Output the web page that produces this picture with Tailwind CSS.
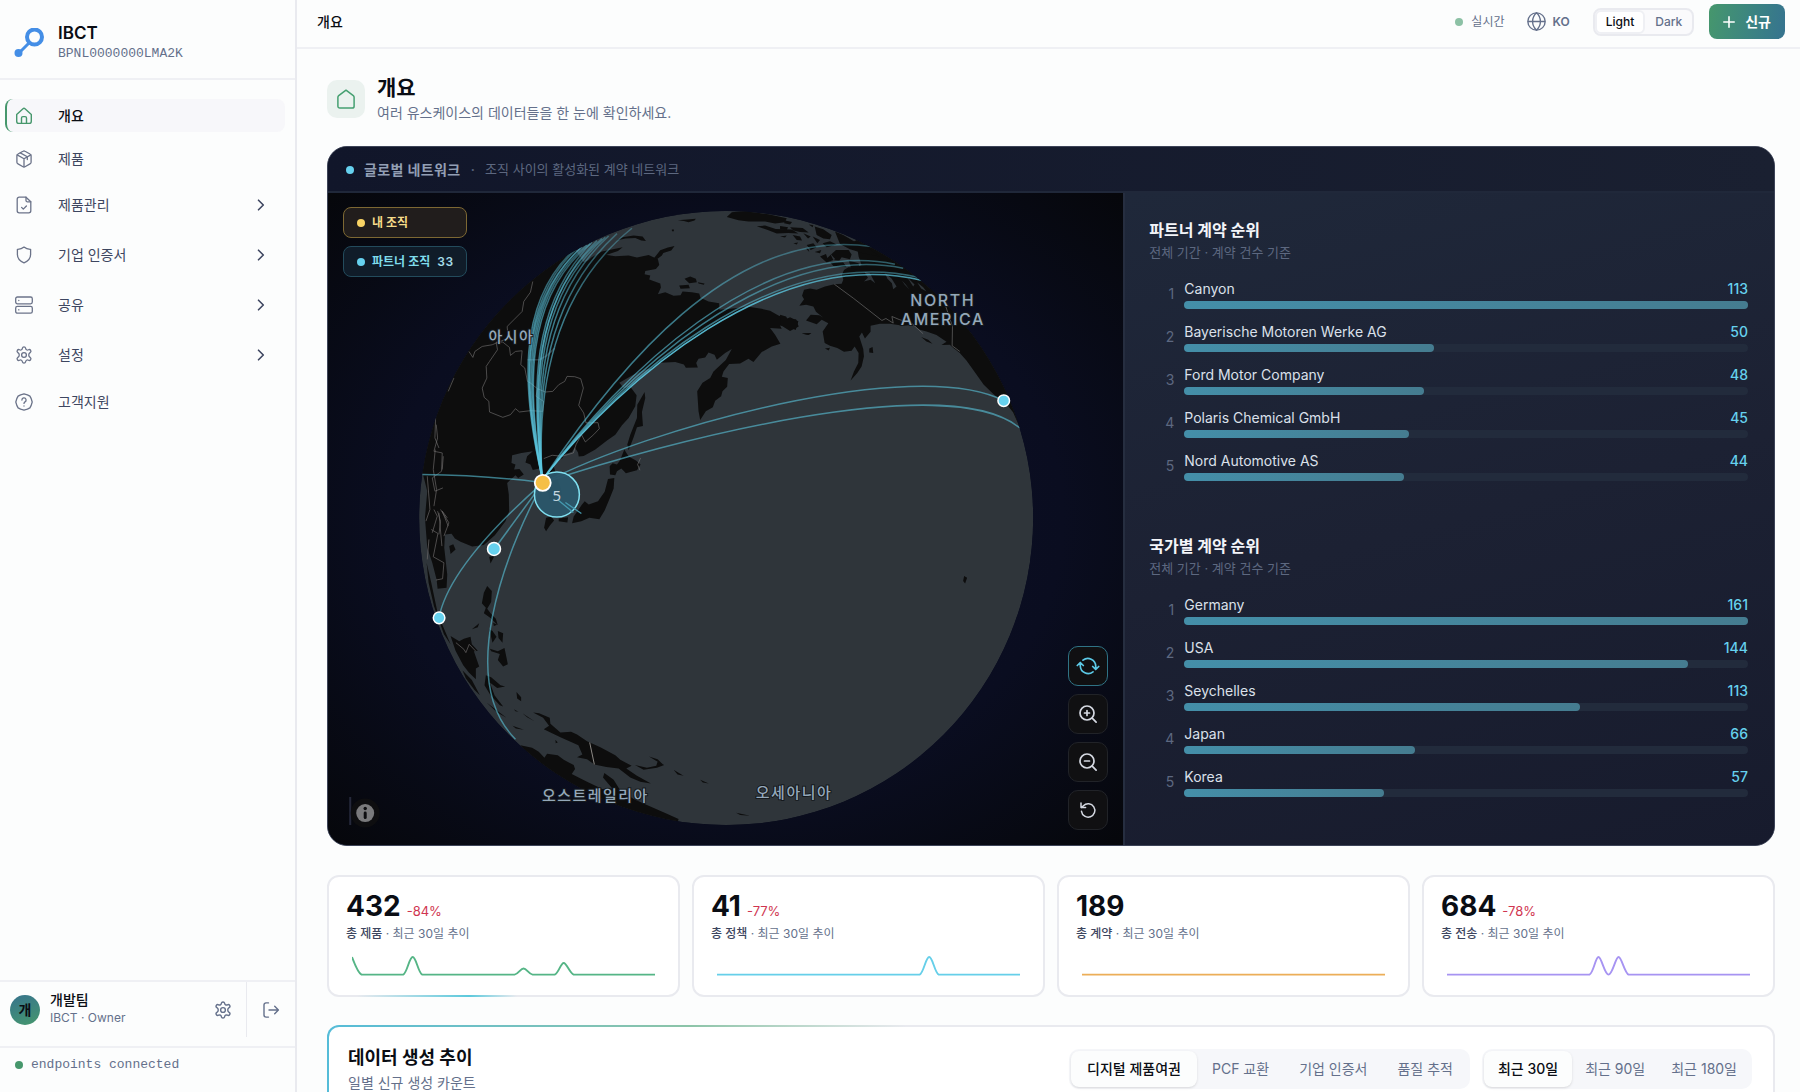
<!DOCTYPE html>
<html lang="ko">
<head>
  <meta charset="UTF-8">
  <title>IBCT - 개요</title>
  <meta name="viewport" content="width=device-width, initial-scale=1.0">
  <script src="https://cdn.jsdelivr.net/npm/@tailwindcss/browser@4"></script>
</head>
<body class="flex h-screen overflow-hidden bg-[#fcfdfd] font-['Inter','Noto_Sans_CJK_KR',sans-serif] text-[#0a0d14]">

  <!-- Sidebar -->
  <aside class="flex w-[297px] shrink-0 flex-col border-r-2 border-[#e9eaef]">
    <div class="flex h-20 items-center gap-3.5 border-b-2 border-[#eff0f4] pl-3.5 pt-2">
      <svg class="size-[30px]" viewBox="0 0 30 30" fill="none" stroke="#448ee6">
        <circle cx="20.500" cy="9" r="7.500" stroke-width="4"/>
        <path d="M15 15L5 25" stroke-width="3"/>
        <circle cx="4.500" cy="25" r="4" fill="#448ee6" stroke="none"/>
      </svg>
      <div>
        <p class="text-[17px] leading-[22px] font-semibold">IBCT</p>
        <p class="font-['Liberation_Mono',monospace] text-[13px] leading-5 text-[#64708b]">BPNL0000000LMA2K</p>
      </div>
    </div>

    <nav class="flex flex-1 flex-col gap-2.5 pl-[5px] pr-2.5 pt-[19px] text-sm text-[#3d4660]">
      <a href="#" class="flex h-[33px] items-center gap-[25px] rounded-lg border-l-2 border-[#46976c] bg-[#f7f7fa] pl-2 font-medium text-[#0a0d14]">
        <svg class="size-[18px] text-[#46976c]" viewBox="0 0 18 18" fill="none" stroke="currentColor" stroke-width="1.400" stroke-linecap="round" stroke-linejoin="round"><path d="M1.700 7.400L8 1.700a1.500 1.500 0 0 1 2 0l6.300 5.700v6.800a2.200 2.200 0 0 1-2.200 2.200H3.900a2.200 2.200 0 0 1-2.200-2.200z"/><path d="M6.500 16.300V11a1.400 1.400 0 0 1 1.400-1.400h2.200a1.400 1.400 0 0 1 1.400 1.400v5.300"/></svg>
        개요
      </a>
      <a href="#" class="flex h-[33px] items-center gap-[25px] pl-2.5">
        <svg class="size-[18px] text-[#6b7389]" viewBox="0 0 18 18" fill="none" stroke="currentColor" stroke-width="1.300" stroke-linecap="round" stroke-linejoin="round"><path d="M8 1.300a2 2 0 0 1 2 0l5 2.700a2 2 0 0 1 1.100 1.700v6.500a2 2 0 0 1-1.100 1.700l-5 2.800a2 2 0 0 1-2 0l-5-2.800a2 2 0 0 1-1.100-1.700V5.700A2 2 0 0 1 3 4z"/><path d="M2.200 4.900L9 8.700l6.800-3.800M9 8.700v8M5.300 2.900l7 3.900v2.700"/></svg>
        제품
      </a>
      <button class="flex h-10 items-center gap-[25px] pl-2.5 pr-5 text-left">
        <svg class="size-[18px] text-[#6b7389]" viewBox="0 0 18 18" fill="none" stroke="currentColor" stroke-width="1.300" stroke-linecap="round" stroke-linejoin="round"><path d="M11 1.200H4.200A2 2 0 0 0 2.200 3.200v11.600a2 2 0 0 0 2 2h9.600a2 2 0 0 0 2-2V5.800z"/><path d="M11 1.200v3.200a1.400 1.400 0 0 0 1.400 1.400h3.400M6.600 11.400l1.700 1.700 3.100-3.100"/></svg>
        <span class="flex-1">제품관리</span>
        <svg class="h-3 w-2" viewBox="0 0 8 12" fill="none" stroke="currentColor" stroke-width="1.600" stroke-linecap="round" stroke-linejoin="round"><path d="M1.500 1.200L6.300 6l-4.800 4.800"/></svg>
      </button>
      <button class="flex h-10 items-center gap-[25px] pl-2.5 pr-5 text-left">
        <svg class="size-[18px] text-[#6b7389]" viewBox="0 0 18 18" fill="none" stroke="currentColor" stroke-width="1.300" stroke-linejoin="round"><path d="M9 1.100c1.700 1.500 3.900 2.300 6.600 2.200v5.200c0 4-2.600 6.700-6.600 8.300-4-1.600-6.600-4.300-6.600-8.300V3.300C5.100 3.400 7.300 2.600 9 1.100z"/></svg>
        <span class="flex-1">기업 인증서</span>
        <svg class="h-3 w-2" viewBox="0 0 8 12" fill="none" stroke="currentColor" stroke-width="1.600" stroke-linecap="round" stroke-linejoin="round"><path d="M1.500 1.200L6.300 6l-4.800 4.800"/></svg>
      </button>
      <button class="flex h-10 items-center gap-[25px] pl-2.5 pr-5 text-left">
        <svg class="size-[18px] text-[#6b7389]" viewBox="0 0 18 18" fill="none" stroke="currentColor" stroke-width="1.300" stroke-linecap="round"><rect x="0.700" y="1" width="16.600" height="6.800" rx="1.700"/><rect x="0.700" y="10.400" width="16.600" height="6.800" rx="1.700"/><path d="M3.800 4.300v.2M3.800 13.700v.2"/></svg>
        <span class="flex-1">공유</span>
        <svg class="h-3 w-2" viewBox="0 0 8 12" fill="none" stroke="currentColor" stroke-width="1.600" stroke-linecap="round" stroke-linejoin="round"><path d="M1.500 1.200L6.300 6l-4.800 4.800"/></svg>
      </button>
      <button class="flex h-10 items-center gap-[25px] pl-2.5 pr-5 text-left">
        <svg class="size-[18px] text-[#6b7389]" viewBox="0 0 18 18" fill="none" stroke="currentColor" stroke-width="1.300" stroke-linejoin="round"><path d="M7.400 2.200a1.650 1.650 0 0 1 3.200 0 1.900 1.900 0 0 0 2.800 1.600 1.600 1.600 0 0 1 1.700 2.800 2.800 2.800 0 0 0 0 4.800 1.600 1.600 0 0 1-1.700 2.800 1.900 1.900 0 0 0-2.800 1.600 1.650 1.650 0 0 1-3.200 0 1.900 1.900 0 0 0-2.800-1.600 1.600 1.600 0 0 1-1.700-2.800 2.800 2.800 0 0 0 0-4.800 1.600 1.600 0 0 1 1.700-2.800 1.900 1.900 0 0 0 2.800-1.600z"/><circle cx="9" cy="9" r="2.400"/></svg>
        <span class="flex-1">설정</span>
        <svg class="h-3 w-2" viewBox="0 0 8 12" fill="none" stroke="currentColor" stroke-width="1.600" stroke-linecap="round" stroke-linejoin="round"><path d="M1.500 1.200L6.300 6l-4.800 4.800"/></svg>
      </button>
      <a href="#" class="flex h-[33px] items-center gap-[25px] pl-2.5">
        <svg class="size-[18px] text-[#6b7389]" viewBox="0 0 18 18" fill="none" stroke="currentColor" stroke-width="1.300" stroke-linecap="round" stroke-linejoin="round"><path d="M9 .8l3.400 1 2.500 1.300 1.300 2.500 1 3.400-1 3.400-1.300 2.500-2.500 1.300-3.400 1-3.400-1-2.500-1.300-1.300-2.500-1-3.400 1-3.400 1.300-2.500 2.500-1.300z"/><path d="M6.900 7a2.100 2.100 0 1 1 3.100 1.900c-.7.400-1 .8-1 1.500M9 12.900v.1"/></svg>
        고객지원
      </a>
    </nav>

    <div class="flex h-[66px] border-t-2 border-[#eff0f4]">
      <div class="flex h-[55px] flex-1 items-center gap-2.5 border-r border-[#e9eaef] pl-2.5 pr-3.5">
        <span class="flex size-[30px] items-center justify-center rounded-full bg-linear-160 from-[#38738c] to-[#46976c] text-sm font-semibold">개</span>
        <div class="flex-1 pb-0.5">
          <p class="text-sm leading-[18px] font-medium">개발팀</p>
          <p class="text-xs leading-[17px] text-[#64708b]">IBCT · Owner</p>
        </div>
        <button aria-label="설정" class="text-[#64708b]">
          <svg class="size-[18px]" viewBox="0 0 18 18" fill="none" stroke="currentColor" stroke-width="1.400" stroke-linejoin="round"><path d="M7.400 2.200a1.650 1.650 0 0 1 3.200 0 1.900 1.900 0 0 0 2.800 1.600 1.600 1.600 0 0 1 1.700 2.800 2.800 2.800 0 0 0 0 4.800 1.600 1.600 0 0 1-1.700 2.800 1.900 1.900 0 0 0-2.800 1.600 1.650 1.650 0 0 1-3.200 0 1.900 1.900 0 0 0-2.800-1.600 1.600 1.600 0 0 1-1.700-2.800 2.800 2.800 0 0 0 0-4.800 1.600 1.600 0 0 1 1.700-2.800 1.900 1.900 0 0 0 2.800-1.600z"/><circle cx="9" cy="9" r="2.400"/></svg>
        </button>
      </div>
      <button aria-label="로그아웃" class="flex h-[55px] w-12 items-center justify-center text-[#64708b]">
        <svg class="size-[18px]" viewBox="0 0 18 18" fill="none" stroke="currentColor" stroke-width="1.400" stroke-linecap="round" stroke-linejoin="round"><path d="M6.500 1.900H4a2 2 0 0 0-2 2v10.200a2 2 0 0 0 2 2h2.500M7 9h9.300M12.700 5.300L16.400 9l-3.700 3.700"/></svg>
      </button>
    </div>
    <div class="flex h-[46px] items-center gap-2 border-t-2 border-[#eff0f4] pb-2.5 pl-[15px] font-['Liberation_Mono',monospace] text-[13px] text-[#64708b]">
      <span class="size-2 rounded-full bg-[#46976c]"></span>endpoints connected
    </div>
  </aside>

  <div class="flex min-w-0 flex-1 flex-col">
    <!-- Top bar -->
    <header class="flex h-[49px] shrink-0 items-center border-b-2 border-[#eff0f4] pb-1 pl-5 pr-[15px]">
      <p class="flex-1 text-sm leading-5 font-medium">개요</p>
      <span class="flex items-center gap-2 text-xs text-[#64708b]"><span class="size-2 rounded-full bg-[#8cc1a5]"></span>실시간</span>
      <button class="ml-[23px] flex items-center gap-1.5 text-xs font-semibold text-[#64708b]">
        <svg class="size-[19px]" viewBox="0 0 18 18" fill="none" stroke="currentColor" stroke-width="1.300"><circle cx="9" cy="9" r="8.200"/><path d="M.8 9h16.400M9 .8c2.400 2.200 3.700 5 3.700 8.200s-1.300 6-3.700 8.200C6.600 15 5.300 12.200 5.300 9S6.600 3 9 .8z"/></svg>
        KO
      </button>
      <div class="ml-[23px] flex rounded-lg border-2 border-[#e9eaef] bg-[#fafafc] text-xs leading-4 font-medium text-[#64708b]">
        <button class="rounded-md border-2 border-[#eff0f4] bg-white px-[9px] py-0.5 text-[#0a0d14]">Light</button>
        <button class="px-2.5 py-1">Dark</button>
      </div>
      <button class="ml-[15px] flex h-[35px] items-center gap-2.5 rounded-lg bg-linear-100 from-[#46976c] to-[#36738f] px-3.5 text-sm font-bold text-white">
        <svg class="size-3" viewBox="0 0 12 12" stroke="currentColor" stroke-width="1.600" stroke-linecap="round"><path d="M6 .8v10.400M.8 6h10.400"/></svg>
        신규
      </button>
    </header>

    <main class="flex flex-1 flex-col overflow-hidden pl-[30px] pr-[25px] pt-[25px]">
      <div class="flex shrink-0 items-center gap-3">
        <span class="flex size-[38px] items-center justify-center rounded-[10px] bg-[#ebf2ef]">
          <svg class="size-5 text-[#46a071]" viewBox="0 0 20 20" fill="none" stroke="currentColor" stroke-width="1.500" stroke-linejoin="round"><path d="M1.900 8.200a2 2 0 0 1 .8-1.600L10 1.200l7.300 5.400a2 2 0 0 1 .8 1.600v9a1.900 1.900 0 0 1-1.900 1.900H3.800a1.900 1.900 0 0 1-1.900-1.900z"/></svg>
        </span>
        <div>
          <h1 class="text-[21px] leading-7 font-bold">개요</h1>
          <p class="text-sm leading-[22px] text-[#64708b]">여러 유스케이스의 데이터들을 한 눈에 확인하세요.</p>
        </div>
      </div>

      <!-- Global network -->
      <section class="mt-[22px] shrink-0 overflow-hidden rounded-[20px] border border-[#3d4458] bg-[#12172a]">
        <div class="flex h-[46px] items-center gap-2.5 border-b-2 border-[#20283a] bg-linear-to-r from-[#11162a] to-[#1a2031] px-[18px] pt-0.5">
          <span class="size-2 rounded-full bg-[#66d1ee]"></span>
          <h2 class="text-sm font-semibold tracking-wide text-[#939fb4]">글로벌 네트워크</h2>
          <span class="text-[#566079]">·</span>
          <p class="text-[13px] text-[#5d6880]">조직 사이의 활성화된 계약 네트워크</p>
        </div>
        <div class="grid grid-cols-[55fr_45fr]">
          <div class="relative bg-radial from-[#0d1028] via-[#0a0d20] via-60% to-[#06070b]">
            <svg class="absolute inset-0 size-full" viewBox="328 193 795 653" fill="none">
              <defs>
                <clipPath id="globe"><circle cx="726" cy="518.500" r="307.500"/></clipPath>
                <linearGradient id="fade" gradientUnits="userSpaceOnUse" x1="0" y1="90" x2="0" y2="350">
                  <stop offset="0" stop-color="#5cc9e2" stop-opacity=".6"/>
                  <stop offset="1" stop-color="#5cc9e2"/>
                </linearGradient>
              </defs>
              <g clip-path="url(#globe)">
                <circle cx="726" cy="518.500" r="307.500" fill="#2f353a"/>

                <!-- Eurasia, Japan -->
                <g transform="translate(415 205) scale(.33333)">
                  <g fill="#0d0d0d">
                    <path d="M505 172L540 158L560 148L600 154L640 152L665 158L700 150L728 163L732 180L722 192L690 198L688 208L705 212L702 224L735 236L737 248L728 268L750 262L775 273L796 271L802 260L830 262L852 266L856 279L880 290L912 295L913 315L960 310L1000 306L1040 312L1065 318L1090 332L1115 342L1125 337L1150 349L1142 376L1120 366L1095 362L1100 372L1065 370L1080 390L1096 417L1070 425L1040 442L1015 472L1000 462L975 476L942 478L925 500L920 516L938 520L936 546L922 560L918 575L900 588L893 608L872 620L855 646L850 620L846 560L862 534L885 520L895 500L932 466L950 433L930 445L905 465L898 450L880 443L870 458L850 462L843 475L848 488L812 489L806 479L780 472L735 474L712 492L690 494L650 512L612 534L625 550L645 546L664 572L660 605L640 640L620 662L600 690L575 708L540 735L505 754L490 756L488 744L478 728L470 742L450 748L440 762L425 762L415 785L425 820L436 850L440 872L418 880L402 884L396 850L385 812L378 790L352 796L345 780L330 774L335 755L352 740L318 745L290 752L288 775L300 780L296 795L312 793L325 810L308 820L300 812L275 835L280 870L281 920L270 950L238 992L205 1022L170 1026L135 1012L118 1002L108 988L88 990L86 1030L95 1110L93 1150L66 1153L63 1125L50 1075L35 1030L28 940L35 860L22 808L-60 760L0 200L300 30L470 120Z"/>
                    <path d="M604 107L622 97L655 92L682 95L692 108L678 107L660 99L630 101Z"/>
                    <path d="M510 176L528 158L560 140L622 127L608 138L572 150Z"/>
                    <path d="M713 164L735 136L758 128L778 123L768 137L744 144L740 152L722 165Z"/>
                    <path d="M788 46L842 41L838 47L820 52L806 48ZM770 74h6v5h-6z"/>
                    <path d="M808 222L825 215L842 222L845 232L822 235ZM848 232L868 236L866 240L850 236ZM792 242L820 240L824 250L796 252Z"/>
                    <path d="M935 36L950 22L990 18L1060 28L1115 40L1110 52L1080 56L1050 50L1000 50L970 46Z"/>
                    <path d="M1025 64L1050 62L1082 72L1130 74L1150 86L1120 84L1085 86L1060 76ZM1095 95L1115 92L1110 98Z"/>
                    <path d="M688 562L690 580L680 622L683 664L665 668L655 698L640 737L636 720L645 690L665 640L666 600Z"/>
                    <path d="M627 735L640 756L662 768L676 780L665 797L645 802L632 806L618 792L605 800L600 812L584 810L583 785L592 776L605 780L614 768Z"/>
                    <path d="M578 823L597 820L595 852L584 880L568 918L552 944L522 940L498 950L470 956L475 936L500 900L508 890L520 900L548 890L568 862Z"/>
                    <path d="M392 940L408 936L416 948L404 962L392 980L386 970ZM430 942L458 938L456 954L430 950Z"/>
                    <path d="M1160 386L1188 385L1180 391Z"/>
                  </g>
                  <g stroke="#7b7878" stroke-width="2.500" stroke-linejoin="round" stroke-opacity=".7">
                    <path d="M242 412L246 435L222 470L212 485L214 520L200 550L206 578L220 590L222 622L262 638L285 630L300 612L312 622L345 618L382 620L384 590L362 575L366 552L345 535L336 530L328 490L316 480L320 438L300 440L285 452L282 428L262 412Z"/>
                    <path d="M366 552L390 562L412 560L430 540L448 530L455 515L478 516L496 522L504 550L490 602L505 625L512 655L548 654L552 672L535 690L510 712L498 690L482 720L474 745L440 755L410 752L385 762"/>
                    <path d="M352 230L345 262L325 290L320 320L295 345L275 365L278 400L230 420L200 425L178 440L172 458L160 440"/>
                    <path d="M62 660L66 700L55 740L80 745L78 800L50 820L58 860L82 850M66 920L75 950L70 990M60 640L58 700L70 730M95 940L80 920L98 965"/>
                    <path d="M676 760L667 780L674 797M98 560L115 520"/>
                    <path d="M336 465L372 465L395 452L418 430" stroke="#3f4850" stroke-width="5"/>
                  </g>
                </g>

                <!-- North America -->
                <g transform="translate(780 190) scale(.33333)">
                  <path fill="#0d0d0d" d="M58 348L72 328L66 318L72 300L90 296L110 300L135 290L163 283L185 282L190 270L186 255L192 240L205 232L230 232L245 225L236 200L232 175L222 155L250 140L420 220L620 420L760 700L720 712L700 668L678 640L672 640L655 625L640 612L612 585L580 540L560 512L540 490L520 474L510 465L485 466L500 456L470 436L440 425L420 420L400 405L370 408L330 402L300 402L272 408L272 426L255 446L246 428L238 440L250 478L252 500L245 530L232 550L212 572L222 545L235 520L236 490L224 470L215 483L192 486L172 475L150 468L134 460L128 425L145 400L125 390L110 403L78 392L92 375L118 376L130 384L108 366L100 350L78 345Z"/>
                  <path fill="#0d0d0d" d="M0 375L18 380L24 390L48 388L56 410L30 424L0 405ZM66 431L94 430L86 436ZM135 476L150 474L146 482ZM268 476L278 472L280 490L268 488ZM424 442L445 450L458 462L440 455ZM553 1160L562 1165L556 1182L550 1175Z"/>
                  <path fill="#0d0d0d" d="M120 200L138 192L142 204L168 180L206 180L215 194L210 208L185 202L178 212L160 210L140 218ZM104 110L130 118L155 135L150 148L130 146L110 135ZM165 125L190 135L232 160L270 178L300 200L250 190L210 178L180 162ZM70 130L92 140L84 146ZM38 135L60 140L66 152L50 150ZM15 92L36 96L30 104L12 100ZM0 108L24 112L20 120L0 118ZM30 112L68 114L86 128L60 126L40 122ZM80 165L100 160L110 172L92 180ZM98 140L120 150L112 160ZM128 160L150 154L170 164L140 172ZM88 186L78 176L84 174ZM104 186L124 180L120 190ZM150 216L190 218L200 232L160 228ZM206 212L236 220L240 240L214 236ZM40 160L54 158L50 164ZM86 104L100 106L98 112Z"/>
                  <path fill="#2f353a" d="M254 246L264 264L252 275L272 270L286 280L270 250ZM316 250L335 266L350 290L340 298L336 280L322 266ZM366 272L378 285L388 298L374 284ZM382 262L404 284L400 290ZM412 278L430 292L440 305L424 296ZM150 190L166 208L160 210ZM214 180L222 190L216 192Z"/>
                  <path stroke="#6e6e6e" stroke-width="2" stroke-linejoin="round" d="M163 283L220 325L306 392L318 386L340 400L336 380L360 390L395 400L430 432M498 350L518 410L517 468L540 485"/>
                </g>

                <!-- South-east Asia, Oceania -->
                <g transform="translate(400 450) scale(.33333)">
                  <path fill="#0d0d0d" d="M146 290L158 284L165 300L150 314ZM266 322L282 320L270 342ZM260 410L274 425L272 458L260 478L272 494L286 508L292 528L270 506L250 492L256 475L244 462L250 430ZM292 545L308 552L306 580L294 566ZM266 540L276 545L288 562L276 580ZM278 520L290 526L280 530ZM268 598L292 606L312 596L318 625L322 645L308 652L292 632L298 614L272 606ZM214 540L236 522L232 534Z"/>
                  <path fill="#0d0d0d" d="M150 560L176 576L190 568L210 562L214 585L232 604L220 606L236 652L226 658L226 690L205 670L188 648L165 604ZM78 340L92 400L112 495L150 585L130 555L100 470L84 400ZM186 664L214 692L238 738L222 722L196 688ZM256 678L272 684L300 708L314 712L290 716L268 700L282 738L308 772L298 768L270 738L252 708ZM348 728L362 744L362 756L350 748ZM340 780L354 788L345 786ZM366 792L402 816L380 804ZM336 830L370 842L346 838ZM258 760L318 806L290 790ZM465 872L472 880L466 882Z"/>
                  <path fill="#0d0d0d" d="M398 790L416 792L448 806L450 824L480 850L512 848L530 856L560 876L600 894L645 918L660 932L694 950L678 958L710 980L752 1003L720 998L690 985L655 958L618 954L582 946L560 930L530 924L546 916L534 888L480 864L430 840L446 830L428 806Z"/>
                  <path fill="#0d0d0d" d="M360 888L395 896L415 908L432 926L440 914L472 918L490 932L520 948L524 960L514 975L560 998L606 1020L636 1018L608 985L612 972L640 992L660 1024L700 1050L740 1068L800 1094L835 1110L830 1130L600 1120L400 960Z"/>
                  <path fill="#0d0d0d" d="M704 948L740 956L768 950L772 938L792 948L770 956L730 962ZM746 922L772 930L790 948L766 934ZM820 962L850 980L832 976ZM900 992L926 1003L908 1000ZM1008 1091L1050 1100L1020 1098Z"/>
                  <g stroke="#6e6b6b" stroke-width="2">
                    <path d="M568 880L582 946" stroke-width="3" stroke="#8d8a86"/>
                    <path d="M100 180L110 200L95 250M120 180L145 220L130 260M115 190L124 290M85 270L80 330M92 240L112 252L98 322L130 340L126 388L106 392M166 580L190 600L196 610L206 585L225 605M76 215L88 180L80 80M104 0L98 60L108 120L100 170M128 20L125 60"/>
                  </g>
                </g>

                <!-- Contract arcs -->
                <g transform="translate(415 205) scale(.33333)" stroke="#5cc9e2" stroke-width="4.500" stroke-opacity=".58">
                  <g stroke="url(#fade)">
                    <path d="M380 820C320 560 303 300 470 140"/>
                    <path d="M380 820C322 560 308 300 480 135"/>
                    <path d="M380 820C326 560 306 300 495 130"/>
                    <path d="M380 820C328 560 316 290 500 125"/>
                    <path d="M380 820C334 560 318 280 515 120"/>
                    <path d="M380 820C336 560 324 280 525 116"/>
                    <path d="M380 820C348 560 346 300 530 112"/>
                    <path d="M380 820C350 560 354 290 545 107"/>
                    <path d="M380 820C354 560 354 270 560 101"/>
                    <path d="M380 820C356 560 364 270 570 97"/>
                    <path d="M380 820C360 560 376 280 580 93"/>
                    <path d="M380 820C362 560 392 280 605 86"/>
                    <path d="M380 820C364 560 412 260 650 70"/>
                    <path d="M385 820C600 500 950 60 1370 125"/>
                    <path d="M385 820C615 510 1040 95 1440 178"/>
                    <path d="M385 820C617 514 1060 108 1465 190"/>
                    <path d="M385 820C618 518 1075 118 1510 217"/>
                    <path d="M385 820C622 522 1085 122 1520 226" stroke-opacity=".9"/>
                  </g>
                  <path d="M385 835C700 670 1500 450 1767 588"/>
                  <path d="M385 835C750 710 1600 490 1815 670"/>
                  <path d="M20 810Q200 812 375 833"/>
                  <path d="M382 835C240 960 95 1110 70 1241"/>
                  <path d="M382 835L237 1033"/>
                  <path d="M382 835C262 1060 125 1430 300 1605"/>
                </g>
              </g>

              <g fill="#66d1ee" stroke="#fff" stroke-width="1.500">
                <circle cx="1004" cy="401" r="5.800"/>
                <circle cx="493.500" cy="549.500" r="6.500"/>
                <circle cx="438.500" cy="618.500" r="5.800"/>
              </g>
              <circle cx="556.500" cy="495" r="22.500" fill="#2b566a" fill-opacity=".96" stroke="#7fdff0" stroke-width="1.500"/>
              <path d="M557 500l16 13M565 503l16 11" stroke="#459ab0" stroke-width="1.300"/>
              <circle cx="542.300" cy="483.300" r="8" fill="#f5bf46" stroke="#fff" stroke-width="1.800"/>
              <text x="556.500" y="501" text-anchor="middle" class="fill-[#c4d5df] font-['Noto_Sans'] text-[15px]">5</text>

              <g text-anchor="middle" class="fill-[#94a8ba] font-['Noto_Sans_CJK_KR'] text-[15px] font-medium tracking-widest" stroke="#15191d" stroke-width="2" paint-order="stroke">
                <text x="511" y="342">아시아</text>
                <text x="595" y="802">오스트레일리아</text>
                <text x="794" y="799">오세아니아</text>
              </g>
              <g text-anchor="middle" class="fill-[#94a8ba] font-['Inter'] text-base font-medium tracking-widest" stroke="#15191d" stroke-width="2" paint-order="stroke">
                <text x="943" y="306">NORTH</text>
                <text x="943" y="325">AMERICA</text>
              </g>

              <path d="M349.500 798v28" stroke="#25283a" stroke-width="2"/>
              <circle cx="364.500" cy="814" r="14.500" fill="#0e0e10"/>
              <circle cx="364.500" cy="814" r="9" fill="#7a7a7c"/>
              <circle cx="364.500" cy="809.500" r="1.700" fill="#0e0e10"/>
              <path d="M364.500 814v4.500" stroke="#0e0e10" stroke-width="3" stroke-linecap="round"/>
            </svg>

            <div class="absolute left-[15px] top-3.5 flex w-[124px] flex-col gap-2 text-xs font-semibold">
              <span class="flex h-[31px] items-center gap-[7px] rounded-lg border border-[#7d6833] bg-[#211d1c] pl-[13px] text-[#f6dc8a]"><span class="size-2 rounded-full bg-[#f8d364]"></span>내 조직</span>
              <span class="flex h-[31px] items-center gap-[7px] rounded-lg border border-[#234b5c] bg-[#101c29] pl-[13px] text-[#7fdcec]"><span class="size-2 rounded-full bg-[#66d1ee]"></span>파트너 조직 <span class="tracking-wider text-[#a5dce8]">33</span></span>
            </div>

            <div class="absolute bottom-[15px] right-[15px] flex flex-col gap-2 text-[#d5d9e2]">
              <button aria-label="자동 회전" class="flex size-10 items-center justify-center rounded-[10px] border border-[#2f7385] bg-[#101012] text-[#5cc9e6]">
                <svg class="h-[18px] w-6" viewBox="0 0 24 18" fill="none" stroke="currentColor" stroke-width="1.700" stroke-linecap="round" stroke-linejoin="round"><path d="M7 3.200A7.800 7.800 0 0 1 19.700 9v2.500M17 14.800A7.800 7.800 0 0 1 4.300 9V6.500M1.300 8.500l3-3 3 3M16.700 9.500l3 3 3-3"/></svg>
              </button>
              <button aria-label="확대" class="flex size-10 items-center justify-center rounded-[10px] border border-[#212328] bg-[#101012]">
                <svg class="size-[18px]" viewBox="0 0 18 18" fill="none" stroke="currentColor" stroke-width="1.700" stroke-linecap="round"><circle cx="8" cy="8" r="7"/><path d="M13.200 13.200l3.900 3.900M5.500 8h5M8 5.500v5"/></svg>
              </button>
              <button aria-label="축소" class="flex size-10 items-center justify-center rounded-[10px] border border-[#212328] bg-[#101012]">
                <svg class="size-[18px]" viewBox="0 0 18 18" fill="none" stroke="currentColor" stroke-width="1.700" stroke-linecap="round"><circle cx="8" cy="8" r="7"/><path d="M13.200 13.200l3.900 3.900M5.500 8h5"/></svg>
              </button>
              <button aria-label="초기화" class="flex size-10 items-center justify-center rounded-[10px] border border-[#212328] bg-[#101012]">
                <svg class="size-[18px]" viewBox="0 0 18 18" fill="none" stroke="currentColor" stroke-width="1.500" stroke-linecap="round" stroke-linejoin="round"><path d="M2.500 10.300a6.700 6.700 0 1 0 1.900-5.600L2.200 6.600M2 2v4.600h4.600"/></svg>
              </button>
            </div>
          </div>

          <div class="flex flex-col gap-[53px] border-l-2 border-[#262e40] bg-linear-165 from-[#1f283a] via-[#1c2133] to-[#171b2d] pb-12 pl-6 pr-[26px] pt-[25px]">
            <section>
              <h3 class="text-base leading-6 font-bold text-[#f3f5f9]">파트너 계약 순위</h3>
              <p class="text-[13px] leading-5 text-[#5d6880]">전체 기간 · 계약 건수 기준</p>
              <ol id="partners" class="mt-[17px] flex flex-col gap-[13px]"></ol>
            </section>
            <section>
              <h3 class="text-base leading-6 font-bold text-[#f3f5f9]">국가별 계약 순위</h3>
              <p class="text-[13px] leading-5 text-[#5d6880]">전체 기간 · 계약 건수 기준</p>
              <ol id="countries" class="mt-[17px] flex flex-col gap-[13px]"></ol>
            </section>
          </div>
        </div>
      </section>

      <!-- Stat cards -->
      <div id="stats" class="mt-[29px] grid shrink-0 grid-cols-4 gap-3"></div>

      <!-- Trend -->
      <section class="mt-7 shrink-0 rounded-xl bg-linear-to-r from-[#55bcd8] via-[#8cc4a8] via-25% to-[#e9eaef] to-40% p-0.5">
        <div class="flex h-80 items-start justify-between rounded-[10px] bg-white pl-[19px] pr-[21px] pt-[17px]">
          <div>
            <h2 class="text-lg leading-7 font-bold">데이터 생성 추이</h2>
            <p class="text-sm leading-[22px] text-[#64708b]">일별 신규 생성 카운트</p>
          </div>
          <div class="mt-[5px] flex gap-3 text-sm text-[#64708b]">
            <div class="flex rounded-[10px] bg-[#f6f7fa] p-0.5">
              <button class="h-9 rounded-lg bg-[#fcfdfd] px-4 font-medium text-[#0a0d14] shadow-sm">디지털 제품여권</button>
              <button class="h-9 px-[15px]">PCF 교환</button>
              <button class="h-9 px-[15px]">기업 인증서</button>
              <button class="h-9 px-[15px]">품질 추적</button>
            </div>
            <div class="flex rounded-[10px] bg-[#f6f7fa] p-0.5">
              <button class="h-9 rounded-lg bg-[#fcfdfd] px-3.5 font-medium text-[#0a0d14] shadow-sm">최근 30일</button>
              <button class="h-9 px-[13px]">최근 90일</button>
              <button class="h-9 px-[13px]">최근 180일</button>
            </div>
          </div>
        </div>
      </section>
    </main>
  </div>

  <script>
    const partners = [
      ['Canyon', 113], ['Bayerische Motoren Werke AG', 50], ['Ford Motor Company', 48],
      ['Polaris Chemical GmbH', 45], ['Nord Automotive AS', 44]
    ];
    const countries = [
      ['Germany', 161], ['USA', 144], ['Seychelles', 113], ['Japan', 66], ['Korea', 57]
    ];
    const stats = [
      { value: 432, delta: '-84%', label: '총 제품', color: '#55b586', glow: true,
        line: 'M0 3C3 11 6 19 9.500 20.600H51C55 19 57 3 60.500 3S66 19 70 20.600H162C166 20 168 14.500 171 14.500S176 20 180 20.600H202C206 19 208 9 211 9S217 19 221 20.600H302' },
      { value: 41, delta: '-77%', label: '총 정책', color: '#66cfe9',
        line: 'M0 20.600H202C206 19 208 3 211.500 3S217 19 221 20.600H302' },
      { value: 189, delta: '', label: '총 계약', color: '#ecae58', line: 'M0 20.600H302' },
      { value: 684, delta: '-78%', label: '총 전송', color: '#a794f2',
        line: 'M0 20.600H142C146 19 148 3 151 3S157 20.600 161 20.600S168 3 171 3S177 19 181 20.600H302' }
    ];

    function renderRanking(id, rows) {
      const max = rows[0][1];
      document.getElementById(id).innerHTML = rows.map(([name, count], i) => `
        <li class="flex items-center gap-2.5">
          <span class="w-[25px] text-right text-sm leading-5 text-[#5d6880]">${i + 1}</span>
          <div class="flex-1">
            <div class="flex justify-between text-sm leading-5 text-[#dbe0ea]">
              <span>${name}</span><span class="font-medium text-[#66d1ee]">${count}</span>
            </div>
            <div class="mt-0.5 h-2 rounded-sm bg-[#222b3c]">
              <div class="h-2 rounded-sm bg-linear-to-r from-[#448fa9] to-[#457c90]" style="width: ${count / max * 100}%"></div>
            </div>
          </div>
        </li>`).join('');
    }

    renderRanking('partners', partners);
    renderRanking('countries', countries);

    document.getElementById('stats').innerHTML = stats.map(s => `
      <article class="relative h-[122px] rounded-xl border-2 border-[#e9eaef] bg-white px-[17px] pt-[11px]">
        <p class="flex h-9 items-baseline gap-1.5 text-[28px] leading-9 font-bold">${s.value}<span class="text-[13px] leading-4 font-normal text-[#d03550]">${s.delta}</span></p>
        <p class="text-xs leading-5 text-[#64708b]"><span class="font-medium text-[#3d4660]">${s.label}</span> · 최근 30일 추이</p>
        <svg class="mt-2.5 h-6 w-full px-1.5" viewBox="0 0 302 24" preserveAspectRatio="none" fill="none" stroke="${s.color}" stroke-width="1.900"><path d="${s.line}"/></svg>
        ${s.glow ? '<span class="absolute -bottom-0.5 left-7 h-0.5 w-40 bg-linear-to-r from-transparent via-[#5cc9dc] via-70% to-transparent"></span>' : ''}
      </article>`).join('');
  </script>
</body>
</html>
